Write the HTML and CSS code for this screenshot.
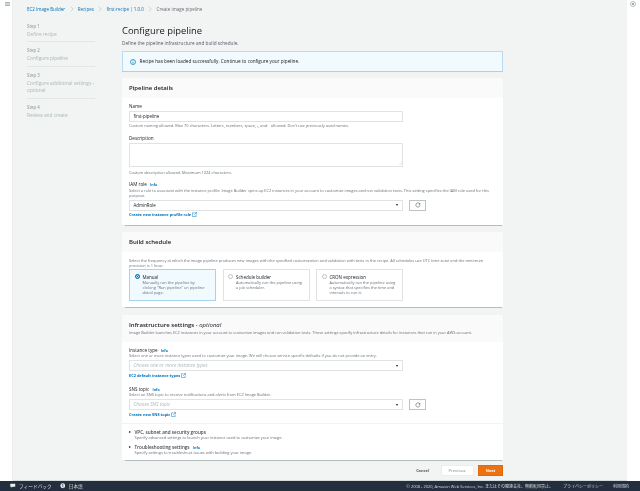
FILE: index.html
```html
<!DOCTYPE html>
<html lang="en">
<head>
<meta charset="utf-8">
<title>Create image pipeline</title>
<link rel="stylesheet" href="styles.css">
</head>
<body>
<div class="app">
  <aside class="rail rail-left">
    <svg class="menu-icon" viewBox="0 0 5 4"><path d="M0 .4h5M0 2h5M0 3.6h5" stroke="#687078" stroke-width=".6" fill="none"/></svg>
  </aside>
  <div class="content">
    <nav class="crumbs">
      <a>EC2 Image Builder</a>
      <svg class="chev" viewBox="0 0 4 6"><path d="M.8.6 3.2 3 .8 5.4" stroke="#aab7b8" stroke-width=".5" fill="none"/></svg>
      <a>Recipes</a>
      <svg class="chev" viewBox="0 0 4 6"><path d="M.8.6 3.2 3 .8 5.4" stroke="#aab7b8" stroke-width=".5" fill="none"/></svg>
      <a>first-recipe | 1.0.0</a>
      <svg class="chev" viewBox="0 0 4 6"><path d="M.8.6 3.2 3 .8 5.4" stroke="#aab7b8" stroke-width=".5" fill="none"/></svg>
      <span>Create image pipeline</span>
    </nav>
    <div class="wizard">
      <ol class="steps">
        <li class="step"><small>Step 1</small><span>Define recipe</span></li>
        <li class="step"><small>Step 2</small><span>Configure pipeline</span></li>
        <li class="step"><small>Step 3</small><span>Configure additional settings - optional</span></li>
        <li class="step"><small>Step 4</small><span>Review and create</span></li>
      </ol>
      <main class="main">
        <h1>Configure pipeline</h1>
        <p class="lead">Define the pipeline infrastructure and build schedule.</p>
        <div class="alert">
          <svg class="alert-icon" viewBox="0 0 6 6"><circle cx="3" cy="3" r="2.5" fill="none" stroke="#0073bb" stroke-width=".7"/><path d="M3 2.6v1.9" stroke="#0073bb" stroke-width=".7"/><circle cx="3" cy="1.7" r=".4" fill="#0073bb"/></svg>
          <span>Recipe has been loaded successfully. Continue to configure your pipeline.</span>
        </div>

        <section class="card card-pipeline">
          <header class="card-head"><h2>Pipeline details</h2></header>
          <div class="card-body">
            <label class="label label-field">Name</label>
            <div class="input">first-pipeline</div>
            <p class="hint hint-after">Custom naming allowed. Max 70 characters. Letters, numbers, space, -, and _ allowed. Don't use previously used names.</p>
            <label class="label label-field label-desc">Description</label>
            <div class="textarea"><svg class="grip" viewBox="0 0 4 4"><path d="M0 4 4 0M2 4l2-2" stroke="#aab7b8" stroke-width=".4"/></svg></div>
            <p class="hint hint-area">Custom description allowed. Maximum 1024 characters.</p>
            <label class="label label-iam">IAM role <a class="info">Info</a></label>
            <p class="hint hint-two">Select a role to associate with the instance profile. Image Builder spins up EC2 instances in your account to customize images and run validation tests. This setting specifies the IAM role used for this purpose.</p>
            <div class="select-row">
              <div class="select"><span>AdminRole</span><i class="caret"></i></div>
              <button class="refresh"><svg viewBox="0 0 6 6"><path d="M4.9 2.2A2.1 2.1 0 1 0 5 3.4" fill="none" stroke="#545b64" stroke-width=".6"/><path d="M5.2.8v1.7H3.5z" fill="#545b64"/></svg></button>
            </div>
            <a class="link">Create new instance profile role<svg class="ext" viewBox="0 0 6 6"><path d="M3 1H.5v4.5H5V3M3.4.4h2.2v2.2M5.4.6 2.6 3.4" fill="none" stroke="#0073bb" stroke-width=".6"/></svg></a>
          </div>
        </section>

        <section class="card card-build">
          <header class="card-head"><h2>Build schedule</h2></header>
          <div class="card-body">
            <p class="hint hint-two">Select the frequency at which the image pipeline produces new images with the specified customization and validation with tests in the recipe. All schedules use UTC time zone and the minimum precision is 1 hour.</p>
            <div class="tiles">
              <div class="tile tile-on"><i class="radio radio-on"></i><div><b>Manual</b><p>Manually run the pipeline by clicking "Run pipeline" on pipeline detail page.</p></div></div>
              <div class="tile"><i class="radio"></i><div><b>Schedule builder</b><p>Automatically run the pipeline using a job scheduler.</p></div></div>
              <div class="tile"><i class="radio"></i><div><b>CRON expression</b><p>Automatically run the pipeline using a syntax that specifies the time and intervals to run it.</p></div></div>
            </div>
          </div>
        </section>

        <section class="card card-infra">
          <header class="card-head head-tall"><h2>Infrastructure settings <em>- optional</em></h2><p class="hint">Image Builder launches EC2 instances in your account to customize images and run validation tests. These settings specify infrastructure details for instances that run in your AWS account.</p></header>
          <div class="card-body">
            <label class="label">Instance type <a class="info">Info</a></label>
            <p class="hint hint-one">Select one or more instance types used to customize your image. We will choose service specific defaults if you do not provide an entry.</p>
            <div class="select-row">
              <div class="select placeholder"><span>Choose one or more instance types</span><i class="caret"></i></div>
            </div>
            <a class="link">EC2 default instance types<svg class="ext" viewBox="0 0 6 6"><path d="M3 1H.5v4.5H5V3M3.4.4h2.2v2.2M5.4.6 2.6 3.4" fill="none" stroke="#0073bb" stroke-width=".6"/></svg></a>
            <label class="label label-sns">SNS topic <a class="info">Info</a></label>
            <p class="hint hint-one">Select an SNS topic to receive notifications and alerts from EC2 Image Builder.</p>
            <div class="select-row">
              <div class="select placeholder"><span>Choose SNS topic</span><i class="caret"></i></div>
              <button class="refresh"><svg viewBox="0 0 6 6"><path d="M4.9 2.2A2.1 2.1 0 1 0 5 3.4" fill="none" stroke="#545b64" stroke-width=".6"/><path d="M5.2.8v1.7H3.5z" fill="#545b64"/></svg></button>
            </div>
            <a class="link">Create new SNS topic<svg class="ext" viewBox="0 0 6 6"><path d="M3 1H.5v4.5H5V3M3.4.4h2.2v2.2M5.4.6 2.6 3.4" fill="none" stroke="#0073bb" stroke-width=".6"/></svg></a>
          </div>
          <div class="expanders">
            <div class="expander"><i class="arrow"></i><div><b>VPC, subnet and security groups</b><p class="hint">Specify advanced settings to launch your instance used to customize your image.</p></div></div>
            <div class="expander"><i class="arrow"></i><div><b>Troubleshooting settings</b> <a class="info">Info</a><p class="hint">Specify settings to troubleshoot issues with building your image.</p></div></div>
          </div>
        </section>

        <div class="actions">
          <button class="btn-text">Cancel</button>
          <button class="btn-prev">Previous</button>
          <button class="btn-next">Next</button>
        </div>
      </main>
    </div>
  </div>
  <aside class="rail rail-right">
    <svg class="gear" viewBox="0 0 6 6"><circle cx="3" cy="3" r="2.5" fill="none" stroke="#879596" stroke-width=".6"/><circle cx="3" cy="3" r="1.1" fill="#879596"/></svg>
  </aside>
</div>
<footer class="footer">
  <div class="foot-left">
    <span class="foot-item"><svg class="foot-icon" viewBox="0 0 6 5"><path d="M.3.3h5.4v3.2H3L1.6 4.8V3.5H.3z" fill="#eaeded"/></svg>フィードバック</span>
    <span class="foot-item foot-lang"><svg class="foot-icon" viewBox="0 0 6 6"><circle cx="3" cy="3" r="2.6" fill="#eaeded"/><path d="M2 1.2 3.6 2 2.6 3.2 3.6 4.8" stroke="#232f3e" stroke-width=".7" fill="none"/></svg>日本語</span>
  </div>
  <div class="foot-right">
    <span>© 2008 - 2020, Amazon Web Services, Inc. またはその関連会社。無断転用禁止。</span>
    <span class="foot-link">プライバシーポリシー</span>
    <span class="foot-link">利用規約</span>
  </div>
</footer>
</body>
</html>
```
FILE: styles.css
```css
* { box-sizing: border-box; margin: 0; padding: 0; }
html, body { width: 640px; height: 491px; overflow: hidden; }
body {
  font-family: "Open Sans", "Noto Sans", "Noto Sans CJK JP", sans-serif;
  font-size: 4.7px;
  line-height: 5px;
  color: #16191f;
  background: #fff;
  display: flex;
  flex-direction: column;
}
a { color: #0073bb; }
ol { list-style: none; }
i { display: block; }

.app { display: flex; height: 481px; filter: blur(.35px); }
.rail { width: 13px; flex: none; background: #fff; position: relative; }
.rail-left { border-right: 1px solid #eaeded; }
.menu-icon { position: absolute; left: 4.5px; top: 2px; width: 5px; height: 4px; }
.gear { position: absolute; left: 3px; top: 1px; width: 6px; height: 6px; }

.content { flex: 1; background: #f2f3f3; padding: 6.5px 0 0 14px; min-width: 0; border-bottom: 1px solid #d5dbdb; }
.crumbs { display: flex; align-items: center; height: 5px; color: #687078; font-size: 4.5px; }
.crumbs a { color: #0073bb; }
.chev { width: 4px; height: 6px; margin: 0 4.3px; }

.wizard { display: flex; margin-top: 12px; }
.steps { width: 68px; flex: none; margin-right: 27px; }
.step { padding: 0 0 4px; margin-bottom: 6px; border-bottom: 1px solid #e3e6e6; color: #aab7b8; }
.step:last-child { border-bottom: 0; }
.step small { display: block; font-size: 4.4px; line-height: 5px; color: #879596; margin-bottom: 2px; }
.step span { display: block; line-height: 6.8px; font-size: 4.8px; }

.main { width: 381px; flex: none; margin-top: 0; }
h1 { font-size: 9.4px; font-weight: 400; line-height: 14px; height: 14px; color: #16191f; }
.lead { font-size: 4.7px; margin-top: 3px; height: 10.5px; color: #545b64; }

.alert {
  height: 21px;
  display: flex;
  align-items: center;
  gap: 3.5px;
  padding: 0 7px;
  background: #f1faff;
  border: 1px solid #b9dcf2;
  border-bottom-color: #a8d2ec;
  font-size: 4.7px;
  color: #16191f;
}
.alert-icon { width: 6px; height: 6px; }

.card { background: #fff; box-shadow: 0 .7px .7px rgba(0, 28, 36, .25); margin-top: 6px; }
.card-head { height: 20px; background: #fafafa; padding: 0 7px; display: flex; align-items: center; }
.head-tall { height: 27px; display: block; padding-top: 6.5px; }
.head-tall .hint { margin-top: 1.5px; }
h2 { font-size: 6px; line-height: 7px; font-weight: 600; color: #16191f; }
h2 em { font-weight: 400; }
.card-body { padding: 5.5px 7px 0; }

.card-pipeline { height: 147px; }
.card-build { height: 75px; margin-top: 7px; }
.card-build .card-body { padding-top: 4.5px; }
.card-infra { height: 145px; margin-top: 8px; }

.label { display: block; font-size: 4.6px; line-height: 5px; color: #16191f; }
.label-field { margin-bottom: 2px; }
.label-desc { margin-top: 7.5px; }
.label-iam { margin-top: 7px; }
.label-sns { margin-top: 9px; }
.info { font-size: 3.6px; font-weight: 700; margin-left: 2px; }

.hint { font-size: 3.95px; line-height: 5px; color: #687078; }
.hint-after { margin-top: 1.5px; }
.hint-area { margin-top: 3.5px; }
.hint-one { height: 7.5px; }
.hint-two { height: 11.5px; white-space: normal; margin-top: 1px; }

.input, .select, .textarea { width: 274px; background: #fff; border: 1px solid #dfe3e4; }
.input { height: 11px; margin-top: 0; padding: 0 3.5px; display: flex; align-items: center; font-size: 4.4px; }
.textarea { height: 24px; margin-top: 0; position: relative; }
.grip { position: absolute; right: .5px; bottom: .5px; width: 3px; height: 3px; }

.select-row { display: flex; gap: 6px; margin-top: 0; }
.select { height: 11px; display: flex; align-items: center; justify-content: space-between; padding: 0 3.5px; font-size: 4.4px; }
.placeholder { color: #aab7b8; font-style: italic; font-size: 4.8px; }
.caret { width: 0; height: 0; border: 1.6px solid transparent; border-top: 2.6px solid #16191f; border-bottom: 0; margin-right: 1px; }
.refresh { width: 17px; height: 11px; background: #fff; border: 1px solid #bcc5c6; display: flex; align-items: center; justify-content: center; }
.refresh svg { width: 6px; height: 6px; }

.link { display: flex; align-items: center; font-size: 3.9px; font-weight: 700; line-height: 5px; margin-top: 1.5px; }
.ext { width: 5px; height: 5px; margin-left: .5px; }

.tiles { display: flex; gap: 6.5px; margin-top: 0; }
.tile { width: 87px; height: 32px; display: flex; gap: 3px; padding: 3.5px 5px 3.5px 4.5px; border: 1px solid #dfe3e4; background: #fff; }
.tile-on { background: #f1faff; border-color: #a8d2ec; padding-right: 8px; }
.tile b { display: block; font-weight: 400; font-size: 4.5px; line-height: 6px; }
.tile p { font-size: 3.95px; line-height: 5px; color: #687078; margin-top: .5px; }
.radio { width: 5px; height: 5px; flex: none; border-radius: 50%; background: #fff; border: .7px solid #bcc5c6; margin-top: .5px; }
.radio-on { background: #0073bb; border: 1px solid #0073bb; box-shadow: inset 0 0 0 .7px #fff; }

.expanders { margin-top: 6.5px; border-top: 1px solid #f2f3f3; padding: 5.5px 7px 0; }
.expander { display: flex; gap: 3.5px; height: 15px; }
.expander b { font-size: 4.6px; font-weight: 600; color: #414750; }
.expander .hint { line-height: 6px; }
.arrow { width: 0; height: 0; margin-top: 1px; flex: none; border: 1.6px solid transparent; border-left: 2.6px solid #16191f; border-right: 0; }

.actions { display: flex; justify-content: flex-end; align-items: center; gap: 4.5px; margin-top: 5px; height: 11px; }
.actions button { font: inherit; font-size: 3.9px; font-weight: 700; height: 11px; }
.btn-text { background: none; border: 0; color: #545b64; margin-right: 7px; }
.btn-prev { width: 33px; background: #fff; border: .5px solid #eaeded; color: #aab7b8; }
.btn-next { width: 25px; background: #ec7211; border: .5px solid #dd6b10; color: #fff; }

.footer {
  height: 10px;
  background: #232f3e;
  color: #d5dbdb;
  display: flex;
  align-items: center;
  justify-content: space-between;
  padding: 0 11px 0 10px;
  font-size: 4px;
  filter: blur(.2px);
}
.foot-left, .foot-right { display: flex; align-items: center; }
.foot-item { display: flex; align-items: center; gap: 3.5px; font-size: 4.7px; }
.foot-lang { margin-left: 8px; }
.foot-icon { width: 5.5px; height: 5.5px; }
.foot-link { margin-left: 10px; font-size: 4px; }
```
